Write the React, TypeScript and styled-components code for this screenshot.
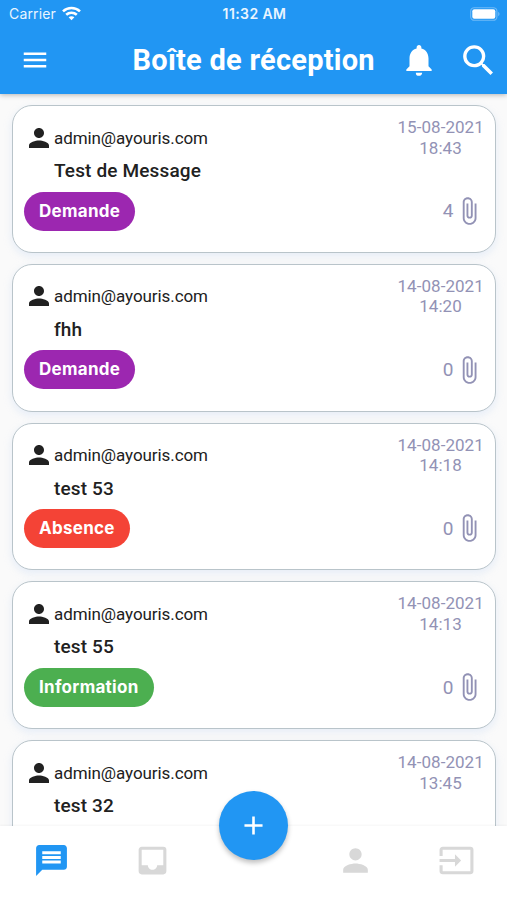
import React from 'react';
import styled, { createGlobalStyle } from 'styled-components';
import {
  MdMenu, MdNotifications, MdSearch, MdPerson, MdAttachFile,
  MdMessage, MdInbox, MdInput, MdAdd,
} from 'react-icons/md';

const GlobalStyle = createGlobalStyle`
  * { box-sizing: border-box; }
  body { margin: 0; background: #fafafa; font-family: Roboto, "Liberation Sans", sans-serif; }
  svg { display: block; flex: none; }
`;

const Screen = styled.div`
  width: 507px;
  height: 900px;
  display: flex;
  flex-direction: column;
  overflow: hidden;
  background: #fafafa;
`;

const Header = styled.header`
  height: 94px;
  flex: none;
  z-index: 1;
  background: #2196f3;
  color: #fff;
  box-shadow: 0 1px 5px rgba(0, 0, 0, 0.28);
`;

const StatusBar = styled.div`
  height: 27px;
  padding: 0 7px 0 9px;
  display: grid;
  grid-template-columns: 1fr auto 1fr;
  align-items: center;
  font-family: Inter, "Liberation Sans", sans-serif;
  font-size: 14px;
  line-height: 27px;
  color: #e9f5ff;
`;

const Carrier = styled.div`
  display: flex;
  align-items: center;
  gap: 6px;
  letter-spacing: 0.15px;
`;

const Clock = styled.div`
  font-size: 14px;
  font-weight: 600;
  letter-spacing: 0.4px;
`;

const BatterySlot = styled.div`
  display: flex;
  justify-content: flex-end;
`;

const TitleBar = styled.div`
  height: 66px;
  padding: 0 8px 0 20px;
  display: flex;
  align-items: center;
`;

const Title = styled.h1`
  margin: 0 0 0 82.5px;
  width: 267.5px;
  white-space: nowrap;
  font-size: 29px;
  line-height: 34px;
  font-weight: 700;
  letter-spacing: 0.25px;
`;

const Actions = styled.div`
  display: flex;
  align-items: center;
  gap: 20.5px;
`;

const List = styled.main`
  flex: 1;
  min-height: 0;
  overflow: hidden;
  padding: 11px 11.5px 0 12px;
  display: flex;
  flex-direction: column;
  gap: 11px;
`;

const Card = styled.article`
  flex: none;
  height: 147.8px;
  padding: 11px 11px 0 11px;
  display: flex;
  justify-content: space-between;
  border: 1.5px solid #b9c4ca;
  border-radius: 20px;
  background: #fff;
  box-shadow: 0 3px 7px 1px rgba(205, 222, 245, 0.38);
`;

const Summary = styled.div`
  display: flex;
  flex-direction: column;
  align-items: flex-start;
`;

const Sender = styled.div`
  height: 41px;
  display: flex;
  align-items: center;
  color: #212121;
  font-size: 17px;
  line-height: 22px;
  letter-spacing: -0.08px;
`;

const Subject = styled.div`
  height: 24px;
  margin-left: 30px;
  line-height: 25px;
  font-size: 19px;
  font-weight: 500;
  letter-spacing: 0.15px;
  color: #212121;
`;

const Tag = styled.div<{ $color?: string }>`
  height: 39px;
  margin-top: 9.7px;
  padding: 0 15px;
  border-radius: 20px;
  background: ${(p) => p.$color};
  color: #fff;
  font-family: Inter, "Liberation Sans", sans-serif;
  font-size: 17px;
  line-height: 39px;
  font-weight: 700;
  letter-spacing: 0.28px;
`;

const Meta = styled.div`
  width: 86px;
  display: flex;
  flex-direction: column;
  justify-content: space-between;
  padding-bottom: 26px;
  color: #9292b5;
`;

const Timestamp = styled.time`
  display: block;
  text-align: center;
  white-space: nowrap;
  font-size: 17px;
  letter-spacing: 0.05px;
  line-height: 20.5px;
`;

const Attachments = styled.div`
  display: flex;
  align-items: center;
  justify-content: flex-end;
  font-size: 19px;
`;

const BottomBar = styled.nav`
  height: 74.5px;
  flex: none;
  position: relative;
  display: grid;
  grid-template-columns: repeat(5, 1fr);
  justify-items: center;
  padding-top: 16.5px;
  background: #fff;
  box-shadow: 0 -1px 2px rgba(0, 0, 0, 0.04);
  color: #d8d8d8;
`;

const NavItem = styled.span<{ $active?: boolean }>`
  padding-left: 1px;
  color: ${(p) => (p.$active ? '#2196f3' : 'inherit')};
`;

const ComposeButton = styled.button`
  position: absolute;
  left: 219.4px;
  top: -34.5px;
  width: 69px;
  height: 69px;
  padding: 0;
  border: 0;
  border-radius: 50%;
  display: flex;
  align-items: center;
  justify-content: center;
  background: #2196f3;
  color: #fff;
  box-shadow: 0 3px 5px rgba(0, 0, 0, 0.25);
`;

const WifiIcon = () => (
  <svg width="19" height="15" viewBox="0 0 19 15" fill="none" stroke="#fff" strokeWidth="2.6">
    <path d="M1 5.4C5.8 .9 13.2 .9 18 5.4" />
    <path d="M4.2 8.8C7.2 6 11.8 6 14.8 8.8" />
    <path d="M9.5 14.2L6.6 11.2C8.2 9.8 10.8 9.8 12.4 11.2Z" fill="#fff" stroke="none" />
  </svg>
);

const BatteryIcon = () => (
  <svg width="30" height="14" viewBox="0 0 30 14">
    <rect x=".7" y=".7" width="26.2" height="12.6" rx="3.6" fill="none" stroke="#6fbaf7" strokeWidth="1.1" />
    <rect x="2.3" y="2.3" width="23" height="9.4" rx="2" fill="#fff" />
    <path d="M28.2 4.8C30 5.6 30 8.4 28.2 9.2Z" fill="#6fbaf7" />
  </svg>
);

const PURPLE = '#9c27b0';

const messages = [
  { subject: 'Test de Message', tag: 'Demande', color: PURPLE, date: '15-08-2021', time: '18:43', files: 4 },
  { subject: 'fhh', tag: 'Demande', color: PURPLE, date: '14-08-2021', time: '14:20', files: 0 },
  { subject: 'test 53', tag: 'Absence', color: '#f44336', date: '14-08-2021', time: '14:18', files: 0 },
  { subject: 'test 55', tag: 'Information', color: '#4caf50', date: '14-08-2021', time: '14:13', files: 0 },
  { subject: 'test 32', date: '14-08-2021', time: '13:45' },
];

export default function App() {
  return (
    <Screen>
      <GlobalStyle />
      <Header>
        <StatusBar>
          <Carrier>Carrier <WifiIcon /></Carrier>
          <Clock>11:32 AM</Clock>
          <BatterySlot><BatteryIcon /></BatterySlot>
        </StatusBar>
        <TitleBar>
          <MdMenu size={30} />
          <Title>Boîte de réception</Title>
          <Actions>
            <MdNotifications size={38} />
            <MdSearch size={41} />
          </Actions>
        </TitleBar>
      </Header>
      <List>
        {messages.map((m) => (
          <Card key={m.time}>
            <Summary>
              <Sender><MdPerson size={30} />admin@ayouris.com</Sender>
              <Subject>{m.subject}</Subject>
              {m.tag && <Tag $color={m.color}>{m.tag}</Tag>}
            </Summary>
            <Meta>
              <Timestamp>{m.date}<br />{m.time}</Timestamp>
              {m.files !== undefined && (
                <Attachments>{m.files}<MdAttachFile size={30} /></Attachments>
              )}
            </Meta>
          </Card>
        ))}
      </List>
      <BottomBar>
        <NavItem $active><MdMessage size={37} /></NavItem>
        <NavItem><MdInbox size={37} /></NavItem>
        <span />
        <NavItem><MdPerson size={37} /></NavItem>
        <NavItem><MdInput size={37} /></NavItem>
        <ComposeButton aria-label="Nouveau message"><MdAdd size={31} /></ComposeButton>
      </BottomBar>
    </Screen>
  );
}
